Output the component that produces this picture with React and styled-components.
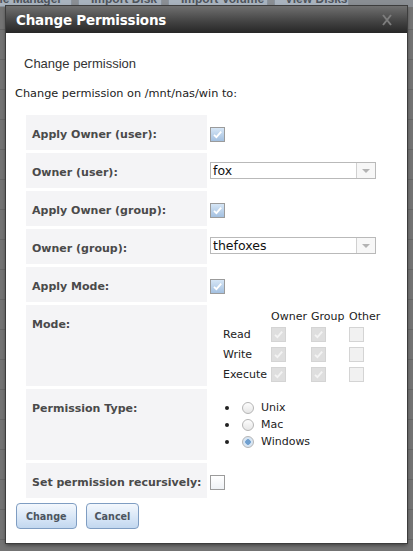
import React from 'react'
import styled, { createGlobalStyle } from 'styled-components'

const Global = createGlobalStyle`
	html, body { margin: 0; padding: 0; }
	body {
		width: 413px;
		height: 551px;
		overflow: hidden;
		background: #727272;
		font-family: "DejaVu Sans", Verdana, sans-serif;
	}
`

// page behind the modal, dimmed
const Backdrop = styled.div`
	position: relative;
	width: 413px;
	height: 551px;
	background: repeating-linear-gradient(#747474 0 29px, #666 29px 30px);
	overflow: hidden;
`

const TabBar = styled.div`
	display: flex;
	gap: 6px;
	height: 7px;
	margin-left: -22px;
	background: #8a8e93;
	overflow: hidden;
`

const Tab = styled.div`
	width: ${props => props.w}px;
	height: 7px;
	flex-shrink: 0;
	display: flex;
	justify-content: ${props => props.end ? 'flex-end' : 'flex-start'};
	padding: 0 ${props => props.pr || 0}px 0 ${props => props.pl || 0}px;
	background: #a9b3be;
	border: 1px solid #8b949e;
	border-top: none;
	box-sizing: border-box;
	font: bold 12px "Liberation Sans", Arial, sans-serif;
	color: #4e545c;
	line-height: 13px;
	white-space: nowrap;
	overflow: hidden;
	& span { display: block; flex-shrink: 0; margin-top: -7px; }
`

const Dialog = styled.div`
	position: absolute;
	left: 6px;
	top: 6px;
	width: 401px;
	height: 537px;
	background: #fff;
	box-shadow: 0 0 0 1px #3d3d3d, 0 2px 4px rgba(0, 0, 0, 0.5);
	display: flex;
	flex-direction: column;
`

const TitleBar = styled.div`
	height: 27px;
	flex-shrink: 0;
	display: flex;
	align-items: center;
	justify-content: space-between;
	padding: 0 15px 0 10px;
	background: linear-gradient(#707070, #454545 55%, #262626);
`

const Title = styled.div`
	font: bold 13.5px "DejaVu Sans", Verdana, sans-serif;
	color: #fff;
	letter-spacing: -0.2px;
`

const Body = styled.div`
	padding: 0 9px;
	display: flex;
	flex-direction: column;
`

const Heading = styled.div`
	font: 13px "Liberation Sans", Arial, sans-serif;
	color: #333;
	margin: 23px 0 0 9px;
	height: 16px;
`

const Intro = styled.div`
	font: 11.3px "DejaVu Sans", Verdana, sans-serif;
	color: #222;
	margin-top: 15px;
	height: 14px;
`

const Form = styled.div`
	display: grid;
	grid-template-columns: 181px 1fr;
	grid-template-rows: 35px 35px 35px 35px 35px 81px 71px 35px;
	column-gap: 3px;
	row-gap: 3px;
	margin: 14px 0 0 11px;
`

const Label = styled.div`
	box-sizing: border-box;
	background: #f4f4f6;
	padding: 13px 0 0 6px;
	font: bold 11px "DejaVu Sans", Verdana, sans-serif;
	color: #4a4a4a;
	white-space: nowrap;
`

const Value = styled.div`
	display: flex;
	align-items: flex-start;
	padding-top: ${props => props.pt}px;
	padding-left: ${props => props.pl || 0}px;
	box-sizing: border-box;
	min-height: 0;
`

const Box = styled.span`
	display: inline-flex;
	align-items: center;
	justify-content: center;
	width: 15px;
	height: 15px;
	box-sizing: border-box;
	border: 1px solid ${props => props.disabled ? '#d4d4d4' : '#9b9b9b'};
	background: ${props => props.disabled
		? (props.checked ? '#dedede' : '#f1f1f1')
		: (props.checked ? 'linear-gradient(#d6e6f6, #a3c0e0)' : 'linear-gradient(#fff, #eef1f5)')};
`

const Checkbox = ({ checked, disabled }) => (
	<Box checked={checked} disabled={disabled}>
		{checked && (
			<svg width="11" height="11" viewBox="0 0 11 11">
				<path d="M2 5.8 L4.4 8.2 L9.2 2.6" fill="none"
					stroke={disabled ? '#f3f3f3' : '#fff'} strokeWidth="1.8" />
			</svg>
		)}
	</Box>
)

const Select = styled.div`
	width: 166px;
	height: 17px;
	box-sizing: border-box;
	border: 1px solid #b9b9b9;
	display: flex;
	background: #fff;
`

const SelectText = styled.div`
	flex: 1;
	font: 12.5px "DejaVu Sans", Verdana, sans-serif;
	color: #111;
	padding-left: 2px;
	line-height: 15px;
`

const Arrow = styled.div`
	width: 18px;
	border-left: 1px solid #d0d0d0;
	background: #f7f7f7;
	display: flex;
	align-items: center;
	justify-content: center;
	&::after {
		content: "";
		border-left: 4px solid transparent;
		border-right: 4px solid transparent;
		border-top: 4px solid #b3b3b3;
	}
`

const Matrix = styled.div`
	display: grid;
	grid-template-columns: 48px 40px 38px 32px;
	grid-template-rows: 14px 20px 20px 20px;
	font: 11px "DejaVu Sans", Verdana, sans-serif;
	color: #222;
	padding-left: 13px;
`

const Head = styled.div`
	line-height: 14px;
`

const Cell = styled.div`
	display: flex;
	align-items: center;
`

const RadioList = styled.div`
	display: flex;
	flex-direction: column;
	font: 11px "DejaVu Sans", Verdana, sans-serif;
	color: #222;
`

const RadioRow = styled.div`
	display: flex;
	align-items: center;
	height: 17px;
	&::before {
		content: "";
		width: 4px;
		height: 4px;
		border-radius: 50%;
		background: #222;
		margin-right: 13px;
	}
`

const Dot = styled.span`
	width: 12px;
	height: 12px;
	border-radius: 50%;
	box-sizing: border-box;
	border: 1px solid #b5b5b5;
	margin-right: 7px;
	background: ${props => props.on
		? 'radial-gradient(circle, #6f9fcf 0 2.5px, #d7e5f3 3px)'
		: 'linear-gradient(#fdfdfd, #e6e6e6)'};
`

const Radio = ({ on, children }) => (
	<RadioRow><Dot on={on} />{children}</RadioRow>
)

const Buttons = styled.div`
	display: flex;
	gap: 9px;
	margin-top: 5px;
	padding-left: 1px;
`

const Button = styled.div`
	height: 26px;
	box-sizing: border-box;
	padding: 0 ${props => props.px}px;
	border: 1px solid #7f9dc2;
	border-radius: 4px;
	background: linear-gradient(#f4f8fd, #d6e5f6 60%, #c2d7ef);
	font: bold 9.6px "DejaVu Sans", Verdana, sans-serif;
	color: #4c5560;
	display: flex;
	align-items: center;
`

const perms = [
	{ name: 'Read', cells: [true, true, false] },
	{ name: 'Write', cells: [true, true, false] },
	{ name: 'Execute', cells: [true, true, false] },
]

export default function App() {
	return (
		<>
			<Global />
			<Backdrop>
				<TabBar>
					<Tab w={94} pr={9} end><span>Volume Manager</span></Tab>
					<Tab w={84} pl={12}><span>Import Disk</span></Tab>
					<Tab w={100} pl={12}><span>Import Volume</span></Tab>
					<Tab w={75} pl={10}><span>View Disks</span></Tab>
				</TabBar>
				<Dialog>
					<TitleBar>
						<Title>Change Permissions</Title>
						<svg width="10" height="12" viewBox="0 0 10 12">
							<path d="M1 1 L9 11 M9 1 L1 11" stroke="#7d7d7d" strokeWidth="2" />
						</svg>
					</TitleBar>
					<Body>
						<Heading>Change permission</Heading>
						<Intro>Change permission on /mnt/nas/win to:</Intro>
						<Form>
							<Label>Apply Owner (user):</Label>
							<Value pt={12}><Checkbox checked /></Value>

							<Label>Owner (user):</Label>
							<Value pt={9}>
								<Select><SelectText>fox</SelectText><Arrow /></Select>
							</Value>

							<Label>Apply Owner (group):</Label>
							<Value pt={12}><Checkbox checked /></Value>

							<Label>Owner (group):</Label>
							<Value pt={8}>
								<Select><SelectText>thefoxes</SelectText><Arrow /></Select>
							</Value>

							<Label>Apply Mode:</Label>
							<Value pt={12}><Checkbox checked /></Value>

							<Label>Mode:</Label>
							<Value pt={5}>
								<Matrix>
									<Head />
									<Head>Owner</Head>
									<Head>Group</Head>
									<Head>Other</Head>
									{perms.map(p => (
										<React.Fragment key={p.name}>
											<Cell>{p.name}</Cell>
											{p.cells.map((c, i) => (
												<Cell key={i}><Checkbox checked={c} disabled /></Cell>
											))}
										</React.Fragment>
									))}
								</Matrix>
							</Value>

							<Label>Permission Type:</Label>
							<Value pt={10} pl={15}>
								<RadioList>
									<Radio>Unix</Radio>
									<Radio>Mac</Radio>
									<Radio on>Windows</Radio>
								</RadioList>
							</Value>

							<Label>Set permission recursively:</Label>
							<Value pt={12}><Checkbox /></Value>
						</Form>
						<Buttons>
							<Button px={9}>Change</Button>
							<Button px={8}>Cancel</Button>
						</Buttons>
					</Body>
				</Dialog>
			</Backdrop>
		</>
	)
}
